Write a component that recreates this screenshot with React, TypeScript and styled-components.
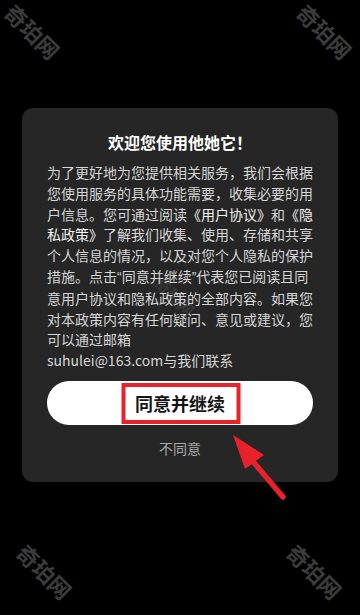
import React from 'react';
import styled, {createGlobalStyle} from "styled-components";

const GlobalStyle = createGlobalStyle`
    html, body {
        margin: 0;
        padding: 0;
        background: #000;
    }

    body {
        font-family: "Noto Sans CJK SC", "Noto Sans", sans-serif;
    }
`;

type MarkProps = {
    $x: number;
    $y: number;
    $size: number;
    $color: string;
}

const marks = [
    {x: 33, y: 31, size: 22, color: '#3b3b3b'},
    {x: 325, y: 31, size: 22, color: '#3b3b3b'},
    {x: 45, y: 571, size: 22, color: '#3b3b3b'},
    {x: 315, y: 571, size: 22, color: '#3b3b3b'},
    {x: 175, y: 296, size: 16, color: 'rgba(255, 255, 255, 0.09)'},
];

export default function App() {
    return (
        <Page>
            <GlobalStyle/>

            <Dialog>
                <Title>欢迎您使用他她它！</Title>

                <Body>
                    为了更好地为您提供相关服务，我们会根据您使用服务的具体功能需要，收集必要的用户信息。您可通过阅读
                    <Link>《用户协议》</Link>和<Link>《隐私政策》</Link>
                    了解我们收集、使用、存储和共享个人信息的情况，以及对您个人隐私的保护措施。点击<Quote>“</Quote>同意并继续<Quote>”</Quote>代表您已阅读且同意用户协议和隐私政策的全部内容。如果您对本政策内容有任何疑问、意见或建议，您可以通过邮箱
                </Body>
                <Body>suhulei@163.com与我们联系</Body>

                <AgreeButton>
                    同意并继续
                    <Highlight/>
                </AgreeButton>

                <Decline>不同意</Decline>
            </Dialog>

            {marks.map((m, i) => (
                <Watermark key={i} $x={m.x} $y={m.y} $size={m.size} $color={m.color}>奇珀网</Watermark>
            ))}

            <Arrow viewBox="225 428 65 78" width="65" height="78">
                <line x1="250" y1="458" x2="283" y2="497" stroke="#e8212b" strokeWidth="5.5" strokeLinecap="round"/>
                <polygon points="233,435 264,455 245,469" fill="#e8212b"/>
            </Arrow>
        </Page>
    );
}

const Page = styled.div`
    position: relative;
    height: 615px;
    overflow: hidden;
    background: #000;
    display: flex;
    flex-direction: column;
    padding: 108px 22px 0 22px;
    box-sizing: border-box;
`;

const Dialog = styled.div`
    background: #262626;
    border-radius: 11px;
    padding: 22px 24px 24px;
    display: flex;
    flex-direction: column;
`;

const Title = styled.h1`
    margin: 0 0 8px;
    text-align: center;
    font-size: 16px;
    line-height: 24px;
    font-weight: 700;
    color: #fff;
`;

const Body = styled.p`
    margin: 0 0 0 1px;
    font-size: 14px;
    line-height: 20.8px;
    color: #d6d6d6;
    text-align: left;
`;

const Link = styled.span`
    color: #f4f4f4;
`;

const Quote = styled.span`
    font-family: "Liberation Sans", sans-serif;
`;

const AgreeButton = styled.div`
    position: relative;
    margin: 10px 1px 0;
    height: 44px;
    border-radius: 22px;
    background: #fff;
    display: flex;
    align-items: center;
    justify-content: center;
    font-size: 18px;
    font-weight: 700;
    color: #151515;
`;

const Highlight = styled.span`
    position: absolute;
    left: 50%;
    top: 2px;
    width: 119px;
    height: 41px;
    transform: translateX(-50%);
    margin-left: 1px;
    border: 4px solid #e8212b;
    box-sizing: border-box;
`;

const Decline = styled.div`
    margin-top: 13px;
    text-align: center;
    font-size: 14px;
    line-height: 20px;
    color: #a8a8a8;
`;

const Watermark = styled.span<MarkProps>`
    position: absolute;
    left: ${p => p.$x}px;
    top: ${p => p.$y}px;
    transform: translate(-50%, -50%) rotate(45deg);
    font-size: ${p => p.$size}px;
    line-height: 1;
    font-weight: 700;
    color: ${p => p.$color};
    white-space: nowrap;
    pointer-events: none;
`;

const Arrow = styled.svg`
    position: absolute;
    left: 225px;
    top: 428px;
`;
